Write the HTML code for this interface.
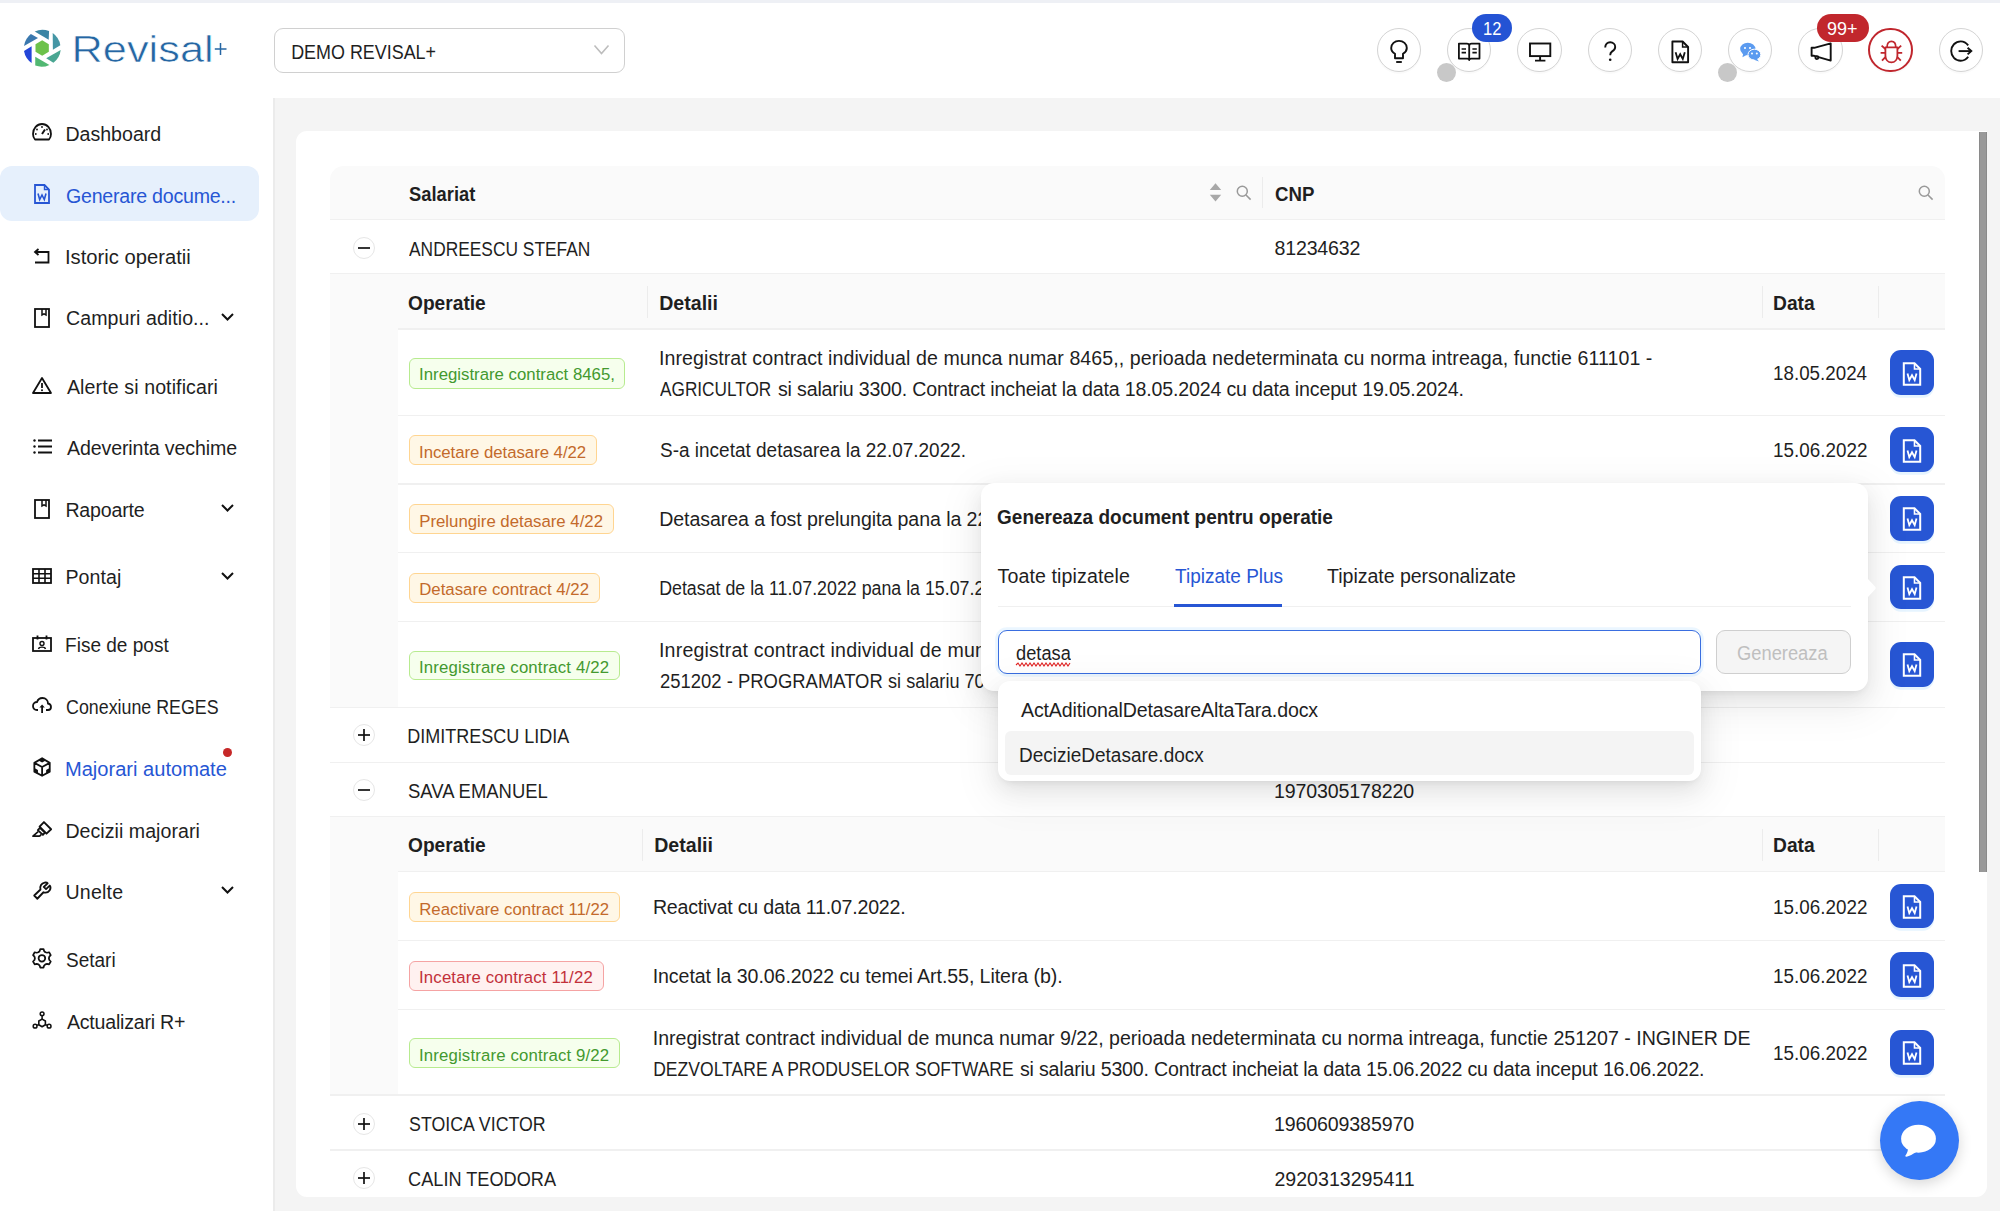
<!DOCTYPE html>
<html><head><meta charset="utf-8"><title>Revisal+</title>
<style>
html,body{margin:0;padding:0;}
body{width:2000px;height:1211px;overflow:hidden;position:relative;background:#fff;font-family:"Liberation Sans",sans-serif;}
.t{position:absolute;white-space:nowrap;line-height:1;}
.b{position:absolute;}
svg.b{overflow:visible;}
</style></head><body>
<div class="b" style="left:0px;top:0px;width:2000px;height:3px;background:#eef0f5"></div>
<div class="b" style="left:272.5px;top:98px;width:1727.5px;height:1113px;background:#f4f4f4"></div>
<div class="b" style="left:273px;top:98px;width:1.5px;height:1113px;background:#ebebeb"></div>
<svg class="b" style="left:20px;top:26px" width="46" height="44" viewBox="0 0 1266 1211"><path d="M405,150 A510,510 0 0 1 800,140 L790,380 Z" fill="#3b85a5"/><path d="M900,195 A510,510 0 0 1 1110,530 L905,655 Z" fill="#4596a5"/><path d="M1120,660 A510,510 0 0 1 920,1010 L720,890 Z" fill="#4aa692"/><path d="M810,1070 A510,510 0 0 1 420,1090 L420,845 Z" fill="#52b872"/><path d="M320,1020 A510,510 0 0 1 110,690 L320,560 Z" fill="#2446d8"/><path d="M110,550 A510,510 0 0 1 300,220 L495,330 Z" fill="#3a78ae"/><polygon points="610,393 793.6,499 793.6,711 610,817 426.4,711 426.4,499" fill="#6cc24a"/></svg>
<div class="t" style="left:71.76px;top:31.08px;font-size:37px;color:#2566a3;transform:scaleX(1.1718);transform-origin:3.04px 0;-webkit-text-stroke:0.6px #fff;">Revisal</div>
<svg class="b" style="left:214px;top:41.5px;" width="14" height="14" viewBox="0 0 14 14"><path d="M6.5,1 L6.5,13 M0.8,7 L12.5,7" stroke="#2566a3" stroke-width="1.5"/></svg>
<div class="b" style="left:274.3px;top:28.3px;width:350.49999999999994px;height:44.3px;background:#fff;border:1.5px solid #d0d0d0;border-radius:9px;box-sizing:border-box"></div>
<div class="t" style="left:290.99px;top:42.61px;font-size:19.6px;color:#1f1f1f;transform:scaleX(0.9146);transform-origin:1.61px 0;">DEMO REVISAL+</div>
<svg class="b" style="left:593px;top:44px;" width="17" height="12" viewBox="0 0 17 12"><path d="M1.5,1.5 L8.5,9.5 L15.5,1.5" fill="none" stroke="#bdbdbd" stroke-width="1.6"/></svg>
<div class="b" style="left:1376.9px;top:28.2px;width:44.2px;height:44.2px;border-radius:50%;border:1.7px solid #d4d4d4;box-sizing:border-box;background:#fff;box-shadow:0 2px 0 rgba(0,0,0,0.02)"></div>
<div class="b" style="left:1446.9px;top:28.2px;width:44.2px;height:44.2px;border-radius:50%;border:1.7px solid #d4d4d4;box-sizing:border-box;background:#fff;box-shadow:0 2px 0 rgba(0,0,0,0.02)"></div>
<div class="b" style="left:1517.4px;top:28.2px;width:44.2px;height:44.2px;border-radius:50%;border:1.7px solid #d4d4d4;box-sizing:border-box;background:#fff;box-shadow:0 2px 0 rgba(0,0,0,0.02)"></div>
<div class="b" style="left:1587.9px;top:28.2px;width:44.2px;height:44.2px;border-radius:50%;border:1.7px solid #d4d4d4;box-sizing:border-box;background:#fff;box-shadow:0 2px 0 rgba(0,0,0,0.02)"></div>
<div class="b" style="left:1657.9px;top:28.2px;width:44.2px;height:44.2px;border-radius:50%;border:1.7px solid #d4d4d4;box-sizing:border-box;background:#fff;box-shadow:0 2px 0 rgba(0,0,0,0.02)"></div>
<div class="b" style="left:1727.9px;top:28.2px;width:44.2px;height:44.2px;border-radius:50%;border:1.7px solid #d4d4d4;box-sizing:border-box;background:#fff;box-shadow:0 2px 0 rgba(0,0,0,0.02)"></div>
<div class="b" style="left:1798.4px;top:28.2px;width:44.2px;height:44.2px;border-radius:50%;border:1.7px solid #d4d4d4;box-sizing:border-box;background:#fff;box-shadow:0 2px 0 rgba(0,0,0,0.02)"></div>
<div class="b" style="left:1868.4px;top:28.2px;width:44.2px;height:44.2px;border-radius:50%;border:2px solid #c0262d;box-sizing:border-box;background:#fff;box-shadow:0 2px 0 rgba(0,0,0,0.02)"></div>
<div class="b" style="left:1938.9px;top:28.2px;width:44.2px;height:44.2px;border-radius:50%;border:1.7px solid #d4d4d4;box-sizing:border-box;background:#fff;box-shadow:0 2px 0 rgba(0,0,0,0.02)"></div>
<svg class="b" style="left:1388px;top:39.5px;" width="22" height="22" viewBox="0 0 22 22"><path d="M7,13.8 C4.6,12.3 3.2,10.3 3.2,8 C3.2,3.9 6.7,0.9 11,0.9 C15.3,0.9 18.8,3.9 18.8,8 C18.8,10.3 17.4,12.3 15,13.8 L15,18.2 L7,18.2 Z" fill="none" stroke="#111" stroke-width="1.9" stroke-linejoin="round"/><path d="M8.2,22 L13.8,22" stroke="#111" stroke-width="1.9"/></svg>
<svg class="b" style="left:1458px;top:39.5px;" width="22" height="22" viewBox="0 0 22 22"><path d="M0.9,3.6 L8.8,3.6 C10.2,3.6 11.2,4.4 11.2,5.8 L11.2,20 C11.2,19 10.4,18.6 9.2,18.6 L0.9,18.6 Z M21.5,3.6 L13.6,3.6 C12.2,3.6 11.2,4.4 11.2,5.8 L11.2,20 C11.2,19 12,18.6 13.2,18.6 L21.5,18.6 Z" fill="none" stroke="#111" stroke-width="1.8" stroke-linejoin="round"/><path d="M3.6,9 L8,9 M3.6,12.6 L8,12.6 M14.4,9 L18.8,9 M14.4,12.6 L18.8,12.6" stroke="#111" stroke-width="1.7"/></svg>
<svg class="b" style="left:1528.5px;top:39.5px;" width="22" height="22" viewBox="0 0 22 22"><rect x="1" y="3.5" width="20.3" height="12.6" fill="none" stroke="#111" stroke-width="1.9"/><path d="M11.1,16 L11.1,20.6 M6,20.6 L16.4,20.6" stroke="#111" stroke-width="1.9"/></svg>
<svg class="b" style="left:1599px;top:39.5px;" width="22" height="22" viewBox="0 0 22 22"><path d="M6.2,7.6 C6.2,4.2 8.4,2.3 11.2,2.3 C14.1,2.3 16.2,4.3 16.2,6.9 C16.2,9.4 14.4,10.6 12.9,11.6 C11.7,12.4 11.2,13.2 11.2,15.2" fill="none" stroke="#111" stroke-width="1.9"/><circle cx="11.2" cy="19.8" r="1.3" fill="#111"/></svg>
<svg class="b" style="left:1669px;top:39.5px;" width="22" height="22" viewBox="0 0 22 22"><path d="M3.4,1.5 L13.6,1.5 L19.1,7 L19.1,22.3 L3.4,22.3 Z" fill="none" stroke="#111" stroke-width="1.9" stroke-linejoin="round"/><path d="M13.6,1.5 L13.6,7 L19.1,7" fill="none" stroke="#111" stroke-width="1.5"/><path d="M6.6,12.2 L8.6,19 L11.2,14.2 L13.8,19 L15.8,12.2" fill="none" stroke="#111" stroke-width="1.8"/></svg>
<svg class="b" style="left:1739px;top:39.5px;" width="22" height="22" viewBox="0 0 22 22"><ellipse cx="8.8" cy="9" rx="7.6" ry="6.3" fill="#5b9bf0"/><path d="M4.2,13.5 L3.4,17.2 L8,14.8 Z" fill="#5b9bf0"/><ellipse cx="15.4" cy="14.6" rx="6.4" ry="5.4" fill="#5b9bf0" stroke="#fff" stroke-width="1"/><path d="M17.5,18.5 L20,21.5 L15,19.7 Z" fill="#5b9bf0"/><circle cx="6" cy="8" r="1.05" fill="#fff"/><circle cx="11" cy="8" r="1.05" fill="#fff"/><circle cx="13" cy="13.6" r="1" fill="#fff"/><circle cx="17.8" cy="13.6" r="1" fill="#fff"/></svg>
<svg class="b" style="left:1809.5px;top:39.5px;" width="22" height="22" viewBox="0 0 22 22"><path d="M1.6,7.8 L4.2,7.8 L20.7,3.4 L20.7,20.6 L4.2,15.8 L1.6,15.8 Z" fill="none" stroke="#111" stroke-width="1.9" stroke-linejoin="round"/><circle cx="6.9" cy="17.6" r="1.6" fill="none" stroke="#111" stroke-width="1.7"/></svg>
<svg class="b" style="left:1879.5px;top:39.5px;" width="22" height="22" viewBox="0 0 22 22"><path d="M5.4,7.4 L17.4,7.4 L17.4,15.5 C17.4,19.6 14.8,22.4 11.4,22.4 C8,22.4 5.4,19.6 5.4,15.5 Z" fill="none" stroke="#c0262d" stroke-width="1.8" stroke-linejoin="round"/><path d="M7,7.4 C7,3.4 9,1.4 11.4,1.4 C13.8,1.4 15.8,3.4 15.8,7.4" fill="none" stroke="#c0262d" stroke-width="1.8"/><path d="M0.6,12.8 L5.4,12.8 M17.4,12.8 L22.2,12.8 M1.6,5.6 L5.4,9 M21.2,5.6 L17.4,9 M2,20.6 L5.6,16.8 M20.8,20.6 L17.2,16.8" fill="none" stroke="#c0262d" stroke-width="1.8"/></svg>
<svg class="b" style="left:1950px;top:39.5px;" width="22" height="22" viewBox="0 0 22 22"><path d="M18.2,5.4 C16.4,3.1 13.9,1.4 10.8,1.4 C5.3,1.4 1.2,5.8 1.2,11.1 C1.2,16.4 5.3,20.8 10.8,20.8 C13.9,20.8 16.4,19.2 18.2,16.8" fill="none" stroke="#111" stroke-width="1.9"/><path d="M8.6,11.1 L20.8,11.1" stroke="#111" stroke-width="1.9"/><path d="M17.6,7.8 L21.3,11.1 L17.6,14.4" fill="none" stroke="#111" stroke-width="1.9"/></svg>
<div class="b" style="left:1471.5px;top:14px;width:40.5px;height:28px;border-radius:14px;background:#2453d4"></div>
<div class="t" style="left:1482.67px;top:20.79px;font-size:17.5px;color:#fff;transform:scaleX(0.9448);transform-origin:1.33px 0;">12</div>
<div class="b" style="left:1817px;top:14px;width:52px;height:28px;border-radius:14px;background:#c1272d"></div>
<div class="t" style="left:1827.38px;top:20.59px;font-size:17.5px;color:#fff;transform:scaleX(1.0285);transform-origin:0.82px 0;">99+</div>
<div class="b" style="left:1437px;top:63px;width:19px;height:19px;border-radius:50%;background:#c8c8c8"></div>
<div class="b" style="left:1718px;top:63px;width:19px;height:19px;border-radius:50%;background:#c8c8c8"></div>
<div class="b" style="left:0;top:166px;width:259px;height:55px;background:#e6f0fc;border-radius:12px"></div>
<div class="t" style="left:65.39px;top:124.71px;font-size:19.6px;color:#1f1f1f;">Dashboard</div>
<div class="t" style="left:66.01px;top:186.61px;font-size:19.6px;color:#2756d4;letter-spacing:-0.237px;">Generare docume...</div>
<div class="t" style="left:65.19px;top:248.11px;font-size:19.6px;color:#1f1f1f;transform:scaleX(1.0314);transform-origin:1.81px 0;">Istoric operatii</div>
<div class="t" style="left:66.00px;top:309.41px;font-size:19.6px;color:#1f1f1f;letter-spacing:0.055px;">Campuri aditio...</div>
<svg class="b" style="left:221px;top:312.7px;" width="13" height="8" viewBox="0 0 13 8"><path d="M1,1 L6.5,6.5 L12,1" fill="none" stroke="#111" stroke-width="2"/></svg>
<div class="t" style="left:66.96px;top:377.51px;font-size:19.6px;color:#1f1f1f;letter-spacing:0.096px;">Alerte si notificari</div>
<div class="t" style="left:66.96px;top:438.81px;font-size:19.6px;color:#1f1f1f;letter-spacing:-0.113px;">Adeverinta vechime</div>
<div class="t" style="left:65.39px;top:500.71px;font-size:19.6px;color:#1f1f1f;letter-spacing:-0.193px;">Rapoarte</div>
<svg class="b" style="left:221px;top:504px;" width="13" height="8" viewBox="0 0 13 8"><path d="M1,1 L6.5,6.5 L12,1" fill="none" stroke="#111" stroke-width="2"/></svg>
<div class="t" style="left:65.39px;top:568.41px;font-size:19.6px;color:#1f1f1f;letter-spacing:0.071px;">Pontaj</div>
<svg class="b" style="left:221px;top:571.7px;" width="13" height="8" viewBox="0 0 13 8"><path d="M1,1 L6.5,6.5 L12,1" fill="none" stroke="#111" stroke-width="2"/></svg>
<div class="t" style="left:65.39px;top:635.51px;font-size:19.6px;color:#1f1f1f;transform:scaleX(0.9713);transform-origin:1.61px 0;">Fise de post</div>
<div class="t" style="left:66.00px;top:697.71px;font-size:19.6px;color:#1f1f1f;transform:scaleX(0.9091);transform-origin:1.00px 0;">Conexiune REGES</div>
<div class="t" style="left:65.39px;top:759.71px;font-size:19.6px;color:#2756d4;transform:scaleX(1.0253);transform-origin:1.61px 0;">Majorari automate</div>
<div class="t" style="left:65.39px;top:821.61px;font-size:19.6px;color:#1f1f1f;letter-spacing:0.038px;">Decizii majorari</div>
<div class="t" style="left:65.49px;top:883.11px;font-size:19.6px;color:#1f1f1f;letter-spacing:0.186px;">Unelte</div>
<svg class="b" style="left:221px;top:886.4px;" width="13" height="8" viewBox="0 0 13 8"><path d="M1,1 L6.5,6.5 L12,1" fill="none" stroke="#111" stroke-width="2"/></svg>
<div class="t" style="left:66.11px;top:951.01px;font-size:19.6px;color:#1f1f1f;transform:scaleX(0.9696);transform-origin:0.89px 0;">Setari</div>
<div class="t" style="left:66.96px;top:1012.81px;font-size:19.6px;color:#1f1f1f;letter-spacing:-0.227px;">Actualizari R+</div>
<div class="b" style="left:222.5px;top:747.5px;width:9px;height:9px;border-radius:50%;background:#c62828"></div>
<svg class="b" style="left:28px;top:752px;" width="28" height="28" viewBox="0 0 1211 1211"><path d="M610,270 L940,470 L940,850 L610,1030 L275,850 L275,470 Z M275,470 L610,650 L940,470 M610,650 L610,1030" fill="none" stroke="#111" stroke-width="78" stroke-linejoin="round"/><path d="M610,270 L770,365 L610,455 L450,365 Z M275,690 L430,775 L430,950 L275,850 Z M940,690 L785,775 L785,950 L940,850 Z" fill="#111"/></svg>
<svg class="b" style="left:28px;top:814px;" width="28" height="28" viewBox="0 0 1211 1211"><path d="M690,350 L1000,660 L800,850 L500,545 Z" fill="none" stroke="#111" stroke-width="80" stroke-linejoin="round"/><path d="M515,600 L730,810 L645,905 L425,695 Z" fill="none" stroke="#111" stroke-width="78" stroke-linejoin="round"/><path d="M440,765 L215,955 L490,955 C530,950 555,920 570,885" fill="none" stroke="#111" stroke-width="75" stroke-linejoin="round"/></svg>
<svg class="b" style="left:28px;top:877px;" width="28" height="28" viewBox="0 0 1211 1211"><path d="M270,800 L540,540 C500,400 580,260 720,240 C780,232 830,245 850,275 L680,430 L780,525 L940,370 C975,420 985,500 940,570 C880,660 760,690 670,660 L400,940 Z" fill="none" stroke="#111" stroke-width="80" stroke-linejoin="round"/></svg>
<svg class="b" style="left:28px;top:944px;" width="28" height="28" viewBox="28 944 28 28"><polygon points="38.40,952.24 39.68,951.03 40.27,949.04 43.53,949.04 44.12,951.03 45.40,952.24 47.08,952.74 49.10,952.26 50.73,955.09 49.31,956.59 48.90,958.30 49.31,960.01 50.73,961.51 49.10,964.34 47.08,963.86 45.40,964.36 44.12,965.57 43.53,967.56 40.27,967.56 39.68,965.57 38.40,964.36 36.72,963.86 34.70,964.34 33.07,961.51 34.49,960.01 34.90,958.30 34.49,956.59 33.07,955.09 34.70,952.26 36.72,952.74" fill="none" stroke="#111" stroke-width="1.75" stroke-linejoin="round"/><circle cx="41.9" cy="958.3" r="3.3" fill="none" stroke="#111" stroke-width="1.75"/></svg>
<svg class="b" style="left:28px;top:1004px;" width="28" height="28" viewBox="28 1004 28 28"><polygon points="42.10,1019.10 45.39,1021.00 45.39,1024.80 42.10,1026.70 38.81,1024.80 38.81,1021.00" fill="none" stroke="#111" stroke-width="1.6" stroke-linejoin="round"/><circle cx="42.1" cy="1013.8" r="1.9" fill="none" stroke="#111" stroke-width="1.5"/><circle cx="35.1" cy="1026.2" r="1.9" fill="none" stroke="#111" stroke-width="1.5"/><circle cx="49.1" cy="1026.2" r="1.9" fill="none" stroke="#111" stroke-width="1.5"/><path d="M42.1,1015.7 L42.1,1019.1 M36.8,1025.2 L38.8,1024.8 M47.4,1025.2 L45.4,1024.8" stroke="#111" stroke-width="1.5"/></svg>
<svg class="b" style="left:32px;top:123px;" width="20" height="18" viewBox="0 0 20 18"><path d="M3,16.5 C1.5,14.8 1,13 1,11 C1,5.5 5,1 10,1 C15,1 19,5.5 19,11 C19,13 18.5,14.8 17,16.5 Z" fill="none" stroke="#111" stroke-width="1.8" stroke-linejoin="round"/><path d="M10,11 L13,6.5" stroke="#111" stroke-width="2"/><circle cx="10" cy="4" r="0.9" fill="#111"/><circle cx="5" cy="6.5" r="0.9" fill="#111"/><circle cx="15" cy="6.5" r="0.9" fill="#111"/><circle cx="3.8" cy="11" r="0.9" fill="#111"/><circle cx="16.2" cy="11" r="0.9" fill="#111"/></svg>
<svg class="b" style="left:34px;top:184px;" width="16" height="20" viewBox="0 0 16 20"><path d="M1,1 L10.5,1 L15,5.5 L15,19 L1,19 Z" fill="none" stroke="#2756d4" stroke-width="1.8"/><path d="M10.5,1 L10.5,5.5 L15,5.5" fill="none" stroke="#2756d4" stroke-width="1.4"/><path d="M4,9.5 L5.7,15.5 L8,11 L10.3,15.5 L12,9.5" fill="none" stroke="#2756d4" stroke-width="1.6"/></svg>
<svg class="b" style="left:34px;top:248px;" width="16" height="16" viewBox="0 0 16 16"><path d="M4.5,1 L1,4 L4.5,7 M1,4 L14.5,4 L14.5,14.5 L1,14.5" fill="none" stroke="#111" stroke-width="1.8"/></svg>
<svg class="b" style="left:34px;top:308px;" width="16" height="20" viewBox="0 0 16 20"><rect x="1" y="1" width="14" height="18" fill="none" stroke="#111" stroke-width="1.8"/><path d="M8,1 L8,7 L10,5.8 L12,7 L12,1" fill="none" stroke="#111" stroke-width="1.5"/></svg>
<svg class="b" style="left:32px;top:377px;" width="20" height="17" viewBox="0 0 20 17"><path d="M10,1 L19,16 L1,16 Z" fill="none" stroke="#111" stroke-width="1.8" stroke-linejoin="round"/><path d="M10,6 L10,11" stroke="#111" stroke-width="1.8"/><circle cx="10" cy="13.3" r="1" fill="#111"/></svg>
<svg class="b" style="left:32.5px;top:439px;" width="19" height="15" viewBox="0 0 19 15"><circle cx="1.5" cy="1.5" r="1.2" fill="#111"/><circle cx="1.5" cy="7.5" r="1.2" fill="#111"/><circle cx="1.5" cy="13.5" r="1.2" fill="#111"/><path d="M5,1.5 L19,1.5 M5,7.5 L19,7.5 M5,13.5 L19,13.5" stroke="#111" stroke-width="1.8"/></svg>
<svg class="b" style="left:34px;top:499px;" width="16" height="20" viewBox="0 0 16 20"><rect x="1" y="1" width="14" height="18" fill="none" stroke="#111" stroke-width="1.8"/><path d="M8,1 L8,7 L10,5.8 L12,7 L12,1" fill="none" stroke="#111" stroke-width="1.5"/></svg>
<svg class="b" style="left:32px;top:568px;" width="20" height="16" viewBox="0 0 20 16"><rect x="1" y="1" width="18" height="14" fill="none" stroke="#111" stroke-width="1.8"/><path d="M1,5.7 L19,5.7 M1,10.3 L19,10.3 M7,1 L7,15 M13,1 L13,15" stroke="#111" stroke-width="1.6"/></svg>
<svg class="b" style="left:32px;top:635px;" width="20" height="17" viewBox="0 0 20 17"><rect x="1" y="3" width="18" height="13" fill="none" stroke="#111" stroke-width="1.8"/><path d="M5.5,0.5 L5.5,4.5 M14.5,0.5 L14.5,4.5" stroke="#111" stroke-width="1.8"/><circle cx="10" cy="8.5" r="2" fill="none" stroke="#111" stroke-width="1.4"/><path d="M6.5,14 C7,11.5 13,11.5 13.5,14" fill="none" stroke="#111" stroke-width="1.4"/></svg>
<svg class="b" style="left:32px;top:697px;" width="20" height="17" viewBox="0 0 20 17"><path d="M6,13 L5,13 C2.5,13 1,11.3 1,9 C1,6.8 2.8,5 5,5 C5.8,2.6 7.8,1 10.5,1 C13.7,1 16,3.4 16,6.5 C18,6.8 19,8.3 19,10 C19,11.8 17.7,13 16,13 L14,13" fill="none" stroke="#111" stroke-width="1.8"/><path d="M10.1,16 L10.1,10" fill="none" stroke="#111" stroke-width="1.8"/><path d="M10.1,7.6 L7.4,10.6 L12.8,10.6 Z" fill="#111"/></svg>
<div class="b" style="left:296px;top:131px;width:1691px;height:1066px;background:#fff;border-radius:11px 0 11px 11px"></div>
<div class="b" style="left:1979px;top:132px;width:7.5px;height:740px;background:#999;border-left:1px solid #8a8a8a;border-right:1px solid #8a8a8a;box-sizing:border-box"></div>
<div class="b" style="left:330px;top:166px;width:1615px;height:54px;background:#fafafa;border-radius:14px 14px 0 0;border-bottom:1.4px solid #f0f0f0;box-sizing:border-box"></div>
<div class="t" style="left:408.64px;top:184.61px;font-size:19.6px;color:#1f1f1f;font-weight:700;transform:scaleX(0.9355);transform-origin:0.56px 0;">Salariat</div>
<div class="t" style="left:1274.70px;top:184.81px;font-size:19.6px;color:#1f1f1f;font-weight:700;transform:scaleX(0.9522);transform-origin:0.80px 0;">CNP</div>
<div class="b" style="left:1262px;top:177px;width:1.400000000000091px;height:31px;background:#ececec"></div>
<svg class="b" style="left:1209px;top:182px;" width="13" height="20" viewBox="0 0 13 20"><path d="M0.8,8 L6.5,1.2 L12.2,8 Z M0.8,12.8 L6.5,19.6 L12.2,12.8 Z" fill="#a8a8a8"/></svg>
<svg class="b" style="left:1235.5px;top:184.5px;" width="16" height="16" viewBox="0 0 16 16"><circle cx="6.3" cy="6.3" r="5" fill="none" stroke="#999" stroke-width="1.5"/><path d="M10,10 L14.6,14.6" stroke="#999" stroke-width="1.6"/></svg>
<svg class="b" style="left:1917.5px;top:184.5px;" width="16" height="16" viewBox="0 0 16 16"><circle cx="6.3" cy="6.3" r="5" fill="none" stroke="#999" stroke-width="1.5"/><path d="M10,10 L14.6,14.6" stroke="#999" stroke-width="1.6"/></svg>
<div class="b" style="left:352.9px;top:236.8px;width:22px;height:22px;border-radius:50%;border:1.3px solid #e6e6e6;box-sizing:border-box;background:#fff"></div>
<svg class="b" style="left:356.9px;top:240.8px;" width="14" height="14" viewBox="0 0 14 14"><path d="M1,7 L13,7" stroke="#111" stroke-width="1.7"/></svg>
<div class="t" style="left:408.96px;top:239.61px;font-size:19.6px;color:#1f1f1f;transform:scaleX(0.8862);transform-origin:0.04px 0;">ANDREESCU STEFAN</div>
<div class="t" style="left:1274.55px;top:239.41px;font-size:19.6px;color:#1f1f1f;letter-spacing:-0.195px;">81234632</div>
<div class="b" style="left:330px;top:273.2px;width:1615px;height:1.3999999999999773px;background:#f0f0f0"></div>
<div class="b" style="left:330px;top:274px;width:1615px;height:433.29999999999995px;background:#fafafa"></div>
<div class="b" style="left:397.5px;top:274px;width:1547.5px;height:55px;background:#fafafa"></div>
<div class="b" style="left:397.5px;top:328.2px;width:1547.5px;height:1.3999999999999773px;background:#f0f0f0"></div>
<div class="t" style="left:408.40px;top:293.51px;font-size:19.6px;color:#1f1f1f;font-weight:700;transform:scaleX(0.9777);transform-origin:0.80px 0;">Operatie</div>
<div class="t" style="left:659.19px;top:293.51px;font-size:19.6px;color:#1f1f1f;font-weight:700;">Detalii</div>
<div class="t" style="left:1773.09px;top:293.51px;font-size:19.6px;color:#1f1f1f;font-weight:700;transform:scaleX(0.9808);transform-origin:1.31px 0;">Data</div>
<div class="b" style="left:647px;top:286px;width:1.3999999999999773px;height:32px;background:#ececec"></div>
<div class="b" style="left:1761.6px;top:286px;width:1.400000000000091px;height:32px;background:#ececec"></div>
<div class="b" style="left:1877.5px;top:286px;width:1.400000000000091px;height:32px;background:#ececec"></div>
<div class="b" style="left:397.5px;top:330px;width:1547.5px;height:85.30000000000001px;background:#fff"></div>
<div class="b" style="left:397.5px;top:415.3px;width:1547.5px;height:68.69999999999999px;background:#fff"></div>
<div class="b" style="left:397.5px;top:484px;width:1547.5px;height:68.70000000000005px;background:#fff"></div>
<div class="b" style="left:397.5px;top:552.7px;width:1547.5px;height:68.79999999999995px;background:#fff"></div>
<div class="b" style="left:397.5px;top:621.5px;width:1547.5px;height:85.79999999999995px;background:#fff"></div>
<div class="b" style="left:397.5px;top:414.6px;width:1547.5px;height:1.3999999999999773px;background:#f0f0f0"></div>
<div class="b" style="left:397.5px;top:483.3px;width:1547.5px;height:1.3999999999999773px;background:#f0f0f0"></div>
<div class="b" style="left:397.5px;top:552.0px;width:1547.5px;height:1.3999999999999773px;background:#f0f0f0"></div>
<div class="b" style="left:397.5px;top:620.8px;width:1547.5px;height:1.3999999999999773px;background:#f0f0f0"></div>
<div class="b" style="left:409.3px;top:357.5px;width:216.2px;height:31.0px;background:#f6ffed;border:1.4px solid #b7eb8f;border-radius:6px;box-sizing:border-box"></div>
<div class="t" style="left:419.05px;top:367.48px;font-size:16.8px;color:#43992f;">Inregistrare contract 8465,</div>
<div class="t" style="left:658.99px;top:348.96px;font-size:19.6px;color:#1f1f1f;letter-spacing:0.066px;">Inregistrat contract individual de munca numar 8465,, perioada nedeterminata cu norma intreaga, functie 611101 -</div>
<div class="t" style="left:660.46px;top:379.96px;font-size:19.6px;color:#1f1f1f;transform:scaleX(0.8788);transform-origin:0.04px 0;">AGRICULTOR</div>
<div class="t" style="left:777.95px;top:379.96px;font-size:19.6px;color:#1f1f1f;letter-spacing:-0.166px;">si salariu 3300. Contract incheiat la data 18.05.2024 cu data inceput 19.05.2024.</div>
<div class="t" style="left:1772.91px;top:364.46px;font-size:19.6px;color:#1f1f1f;transform:scaleX(0.9581);transform-origin:1.49px 0;">18.05.2024</div>
<div class="b" style="left:1889.5px;top:350.2px;width:44.8px;height:44.8px;border-radius:11px;background:#2756d4;box-shadow:0 2.8px 0 rgba(5,145,255,0.1)"></div>
<svg class="b" style="left:1902px;top:361.5px;" width="20" height="24" viewBox="0 0 20 24"><path d="M1.8,1.3 L12.5,1.3 L18.2,7 L18.2,22.8 L1.8,22.8 Z" fill="none" stroke="#fff" stroke-width="2"/><path d="M12.5,1.3 L12.5,7 L18.2,7" fill="none" stroke="#fff" stroke-width="1.6"/><path d="M5.5,11.5 L7.3,18.2 L10,13.2 L12.7,18.2 L14.5,11.5" fill="none" stroke="#fff" stroke-width="1.8"/></svg>
<div class="b" style="left:409.3px;top:435px;width:187.7px;height:30.30000000000001px;background:#fff7e6;border:1.4px solid #ffd591;border-radius:6px;box-sizing:border-box"></div>
<div class="t" style="left:419.05px;top:444.63px;font-size:16.8px;color:#c36a2b;letter-spacing:-0.039px;">Incetare detasare 4/22</div>
<div class="t" style="left:659.91px;top:441.46px;font-size:19.6px;color:#1f1f1f;transform:scaleX(0.9687);transform-origin:0.89px 0;">S-a incetat detasarea la 22.07.2022.</div>
<div class="t" style="left:1772.91px;top:441.46px;font-size:19.6px;color:#1f1f1f;transform:scaleX(0.9622);transform-origin:1.49px 0;">15.06.2022</div>
<div class="b" style="left:1889.5px;top:427.2px;width:44.8px;height:44.8px;border-radius:11px;background:#2756d4;box-shadow:0 2.8px 0 rgba(5,145,255,0.1)"></div>
<svg class="b" style="left:1902px;top:438.5px;" width="20" height="24" viewBox="0 0 20 24"><path d="M1.8,1.3 L12.5,1.3 L18.2,7 L18.2,22.8 L1.8,22.8 Z" fill="none" stroke="#fff" stroke-width="2"/><path d="M12.5,1.3 L12.5,7 L18.2,7" fill="none" stroke="#fff" stroke-width="1.6"/><path d="M5.5,11.5 L7.3,18.2 L10,13.2 L12.7,18.2 L14.5,11.5" fill="none" stroke="#fff" stroke-width="1.8"/></svg>
<div class="b" style="left:409.3px;top:504.4px;width:204.3px;height:29.800000000000068px;background:#fff7e6;border:1.4px solid #ffd591;border-radius:6px;box-sizing:border-box"></div>
<div class="t" style="left:419.22px;top:513.78px;font-size:16.8px;color:#c36a2b;">Prelungire detasare 4/22</div>
<div class="t" style="left:659.19px;top:510.16px;font-size:19.6px;color:#1f1f1f;letter-spacing:-0.084px;">Detasarea a fost prelungita pana la 22.07.2022.</div>
<div class="t" style="left:1772.91px;top:510.16px;font-size:19.6px;color:#1f1f1f;transform:scaleX(0.9622);transform-origin:1.49px 0;">15.06.2022</div>
<div class="b" style="left:1889.5px;top:496.0px;width:44.8px;height:44.8px;border-radius:11px;background:#2756d4;box-shadow:0 2.8px 0 rgba(5,145,255,0.1)"></div>
<svg class="b" style="left:1902px;top:507.2px;" width="20" height="24" viewBox="0 0 20 24"><path d="M1.8,1.3 L12.5,1.3 L18.2,7 L18.2,22.8 L1.8,22.8 Z" fill="none" stroke="#fff" stroke-width="2"/><path d="M12.5,1.3 L12.5,7 L18.2,7" fill="none" stroke="#fff" stroke-width="1.6"/><path d="M5.5,11.5 L7.3,18.2 L10,13.2 L12.7,18.2 L14.5,11.5" fill="none" stroke="#fff" stroke-width="1.8"/></svg>
<div class="b" style="left:409.3px;top:573px;width:190.99999999999994px;height:30px;background:#fff7e6;border:1.4px solid #ffd591;border-radius:6px;box-sizing:border-box"></div>
<div class="t" style="left:419.22px;top:582.48px;font-size:16.8px;color:#c36a2b;">Detasare contract 4/22</div>
<div class="t" style="left:659.19px;top:578.91px;font-size:19.6px;color:#1f1f1f;transform:scaleX(0.9082);transform-origin:1.61px 0;">Detasat de la 11.07.2022 pana la 15.07.2022 in Germania.</div>
<div class="t" style="left:1772.91px;top:578.91px;font-size:19.6px;color:#1f1f1f;transform:scaleX(0.9622);transform-origin:1.49px 0;">15.06.2022</div>
<div class="b" style="left:1889.5px;top:564.7px;width:44.8px;height:44.8px;border-radius:11px;background:#2756d4;box-shadow:0 2.8px 0 rgba(5,145,255,0.1)"></div>
<svg class="b" style="left:1902px;top:576.0px;" width="20" height="24" viewBox="0 0 20 24"><path d="M1.8,1.3 L12.5,1.3 L18.2,7 L18.2,22.8 L1.8,22.8 Z" fill="none" stroke="#fff" stroke-width="2"/><path d="M12.5,1.3 L12.5,7 L18.2,7" fill="none" stroke="#fff" stroke-width="1.6"/><path d="M5.5,11.5 L7.3,18.2 L10,13.2 L12.7,18.2 L14.5,11.5" fill="none" stroke="#fff" stroke-width="1.8"/></svg>
<div class="b" style="left:409.3px;top:650.5px;width:210.59999999999997px;height:29.600000000000023px;background:#f6ffed;border:1.4px solid #b7eb8f;border-radius:6px;box-sizing:border-box"></div>
<div class="t" style="left:419.05px;top:659.78px;font-size:16.8px;color:#43992f;letter-spacing:0.137px;">Inregistrare contract 4/22</div>
<div class="t" style="left:658.99px;top:640.71px;font-size:19.6px;color:#1f1f1f;letter-spacing:0.183px;">Inregistrat contract individual de munca numar 4/22, perioada nedeterminata cu norma intreaga, functie</div>
<div class="t" style="left:659.91px;top:671.71px;font-size:19.6px;color:#1f1f1f;transform:scaleX(0.9411);transform-origin:0.99px 0;">251202 - PROGRAMATOR</div>
<div class="t" style="left:888.35px;top:671.71px;font-size:19.6px;color:#1f1f1f;transform:scaleX(0.9241);transform-origin:0.55px 0;">si salariu 7000. Contract incheiat la data 15.06.2022 cu data inceput 16.06.2022.</div>
<div class="t" style="left:1772.91px;top:656.21px;font-size:19.6px;color:#1f1f1f;transform:scaleX(0.9622);transform-origin:1.49px 0;">15.06.2022</div>
<div class="b" style="left:1889.5px;top:642.0px;width:44.8px;height:44.8px;border-radius:11px;background:#2756d4;box-shadow:0 2.8px 0 rgba(5,145,255,0.1)"></div>
<svg class="b" style="left:1902px;top:653.3px;" width="20" height="24" viewBox="0 0 20 24"><path d="M1.8,1.3 L12.5,1.3 L18.2,7 L18.2,22.8 L1.8,22.8 Z" fill="none" stroke="#fff" stroke-width="2"/><path d="M12.5,1.3 L12.5,7 L18.2,7" fill="none" stroke="#fff" stroke-width="1.6"/><path d="M5.5,11.5 L7.3,18.2 L10,13.2 L12.7,18.2 L14.5,11.5" fill="none" stroke="#fff" stroke-width="1.8"/></svg>
<div class="b" style="left:330px;top:706.6999999999999px;width:1615px;height:1.3999999999999773px;background:#f0f0f0"></div>
<div class="b" style="left:352.9px;top:724.0px;width:22px;height:22px;border-radius:50%;border:1.3px solid #e6e6e6;box-sizing:border-box;background:#fff"></div>
<svg class="b" style="left:356.9px;top:728px;" width="14" height="14" viewBox="0 0 14 14"><path d="M1,7 L13,7" stroke="#111" stroke-width="1.7"/><path d="M7,1 L7,13" stroke="#111" stroke-width="1.7"/></svg>
<div class="t" style="left:407.39px;top:726.91px;font-size:19.6px;color:#1f1f1f;transform:scaleX(0.9189);transform-origin:1.61px 0;">DIMITRESCU LIDIA</div>
<div class="t" style="left:1273.91px;top:726.81px;font-size:19.6px;color:#1f1f1f;letter-spacing:-0.104px;">1970305178221</div>
<div class="b" style="left:330px;top:761.7px;width:1615px;height:1.3999999999999773px;background:#f0f0f0"></div>
<div class="b" style="left:352.9px;top:779.0px;width:22px;height:22px;border-radius:50%;border:1.3px solid #e6e6e6;box-sizing:border-box;background:#fff"></div>
<svg class="b" style="left:356.9px;top:783px;" width="14" height="14" viewBox="0 0 14 14"><path d="M1,7 L13,7" stroke="#111" stroke-width="1.7"/></svg>
<div class="t" style="left:408.11px;top:781.71px;font-size:19.6px;color:#1f1f1f;transform:scaleX(0.9410);transform-origin:0.89px 0;">SAVA EMANUEL</div>
<div class="t" style="left:1273.91px;top:781.71px;font-size:19.6px;color:#1f1f1f;letter-spacing:-0.120px;">1970305178220</div>
<div class="b" style="left:330px;top:816px;width:1615px;height:1.3999999999999773px;background:#f0f0f0"></div>
<div class="b" style="left:330px;top:816.7px;width:1615px;height:278.29999999999995px;background:#fafafa"></div>
<div class="b" style="left:397.5px;top:816.7px;width:1547.5px;height:55.0px;background:#fafafa"></div>
<div class="b" style="left:397.5px;top:870.9000000000001px;width:1547.5px;height:1.3999999999999773px;background:#f0f0f0"></div>
<div class="t" style="left:408.40px;top:836.21px;font-size:19.6px;color:#1f1f1f;font-weight:700;transform:scaleX(0.9777);transform-origin:0.80px 0;">Operatie</div>
<div class="t" style="left:654.19px;top:836.21px;font-size:19.6px;color:#1f1f1f;font-weight:700;">Detalii</div>
<div class="t" style="left:1773.09px;top:836.21px;font-size:19.6px;color:#1f1f1f;font-weight:700;transform:scaleX(0.9808);transform-origin:1.31px 0;">Data</div>
<div class="b" style="left:642px;top:828.7px;width:1.3999999999999773px;height:32.0px;background:#ececec"></div>
<div class="b" style="left:1761.6px;top:828.7px;width:1.400000000000091px;height:32.0px;background:#ececec"></div>
<div class="b" style="left:1877.5px;top:828.7px;width:1.400000000000091px;height:32.0px;background:#ececec"></div>
<div class="b" style="left:397.5px;top:871.7px;width:1547.5px;height:68.59999999999991px;background:#fff"></div>
<div class="b" style="left:397.5px;top:940.3px;width:1547.5px;height:69.10000000000002px;background:#fff"></div>
<div class="b" style="left:397.5px;top:1009.4px;width:1547.5px;height:85.60000000000002px;background:#fff"></div>
<div class="b" style="left:397.5px;top:939.5999999999999px;width:1547.5px;height:1.3999999999999773px;background:#f0f0f0"></div>
<div class="b" style="left:397.5px;top:1008.6999999999999px;width:1547.5px;height:1.3999999999999773px;background:#f0f0f0"></div>
<div class="b" style="left:409.3px;top:892.2px;width:210.7px;height:29.899999999999977px;background:#fff7e6;border:1.4px solid #ffd591;border-radius:6px;box-sizing:border-box"></div>
<div class="t" style="left:419.22px;top:901.63px;font-size:16.8px;color:#c36a2b;">Reactivare contract 11/22</div>
<div class="t" style="left:652.89px;top:897.81px;font-size:19.6px;color:#1f1f1f;letter-spacing:-0.220px;">Reactivat cu data 11.07.2022.</div>
<div class="t" style="left:1772.91px;top:897.81px;font-size:19.6px;color:#1f1f1f;transform:scaleX(0.9622);transform-origin:1.49px 0;">15.06.2022</div>
<div class="b" style="left:1889.5px;top:883.6px;width:44.8px;height:44.8px;border-radius:11px;background:#2756d4;box-shadow:0 2.8px 0 rgba(5,145,255,0.1)"></div>
<svg class="b" style="left:1902px;top:894.9px;" width="20" height="24" viewBox="0 0 20 24"><path d="M1.8,1.3 L12.5,1.3 L18.2,7 L18.2,22.8 L1.8,22.8 Z" fill="none" stroke="#fff" stroke-width="2"/><path d="M12.5,1.3 L12.5,7 L18.2,7" fill="none" stroke="#fff" stroke-width="1.6"/><path d="M5.5,11.5 L7.3,18.2 L10,13.2 L12.7,18.2 L14.5,11.5" fill="none" stroke="#fff" stroke-width="1.8"/></svg>
<div class="b" style="left:409.3px;top:960.8px;width:194.3px;height:29.90000000000009px;background:#fff1f0;border:1.4px solid #f5a3a3;border-radius:6px;box-sizing:border-box"></div>
<div class="t" style="left:419.05px;top:970.23px;font-size:16.8px;color:#c2303a;letter-spacing:0.150px;">Incetare contract 11/22</div>
<div class="t" style="left:652.69px;top:966.66px;font-size:19.6px;color:#1f1f1f;letter-spacing:-0.080px;">Incetat la 30.06.2022 cu temei Art.55, Litera (b).</div>
<div class="t" style="left:1772.91px;top:966.66px;font-size:19.6px;color:#1f1f1f;transform:scaleX(0.9622);transform-origin:1.49px 0;">15.06.2022</div>
<div class="b" style="left:1889.5px;top:952.4px;width:44.8px;height:44.8px;border-radius:11px;background:#2756d4;box-shadow:0 2.8px 0 rgba(5,145,255,0.1)"></div>
<svg class="b" style="left:1902px;top:963.7px;" width="20" height="24" viewBox="0 0 20 24"><path d="M1.8,1.3 L12.5,1.3 L18.2,7 L18.2,22.8 L1.8,22.8 Z" fill="none" stroke="#fff" stroke-width="2"/><path d="M12.5,1.3 L12.5,7 L18.2,7" fill="none" stroke="#fff" stroke-width="1.6"/><path d="M5.5,11.5 L7.3,18.2 L10,13.2 L12.7,18.2 L14.5,11.5" fill="none" stroke="#fff" stroke-width="1.8"/></svg>
<div class="b" style="left:409.3px;top:1038px;width:210.7px;height:30.40000000000009px;background:#f6ffed;border:1.4px solid #b7eb8f;border-radius:6px;box-sizing:border-box"></div>
<div class="t" style="left:419.05px;top:1047.68px;font-size:16.8px;color:#43992f;letter-spacing:0.141px;">Inregistrare contract 9/22</div>
<div class="t" style="left:652.69px;top:1028.51px;font-size:19.6px;color:#1f1f1f;">Inregistrat contract individual de munca numar 9/22, perioada nedeterminata cu norma intreaga, functie 251207 - INGINER DE</div>
<div class="t" style="left:653.39px;top:1059.51px;font-size:19.6px;color:#1f1f1f;transform:scaleX(0.8959);transform-origin:1.61px 0;">DEZVOLTARE A PRODUSELOR SOFTWARE</div>
<div class="t" style="left:1019.95px;top:1059.51px;font-size:19.6px;color:#1f1f1f;letter-spacing:-0.184px;">si salariu 5300. Contract incheiat la data 15.06.2022 cu data inceput 16.06.2022.</div>
<div class="t" style="left:1772.91px;top:1044.01px;font-size:19.6px;color:#1f1f1f;transform:scaleX(0.9622);transform-origin:1.49px 0;">15.06.2022</div>
<div class="b" style="left:1889.5px;top:1029.8px;width:44.8px;height:44.8px;border-radius:11px;background:#2756d4;box-shadow:0 2.8px 0 rgba(5,145,255,0.1)"></div>
<svg class="b" style="left:1902px;top:1041.1px;" width="20" height="24" viewBox="0 0 20 24"><path d="M1.8,1.3 L12.5,1.3 L18.2,7 L18.2,22.8 L1.8,22.8 Z" fill="none" stroke="#fff" stroke-width="2"/><path d="M12.5,1.3 L12.5,7 L18.2,7" fill="none" stroke="#fff" stroke-width="1.6"/><path d="M5.5,11.5 L7.3,18.2 L10,13.2 L12.7,18.2 L14.5,11.5" fill="none" stroke="#fff" stroke-width="1.8"/></svg>
<div class="b" style="left:330px;top:1094.4px;width:1615px;height:1.400000000000091px;background:#f0f0f0"></div>
<div class="b" style="left:352.9px;top:1112.5px;width:22px;height:22px;border-radius:50%;border:1.3px solid #e6e6e6;box-sizing:border-box;background:#fff"></div>
<svg class="b" style="left:356.9px;top:1116.5px;" width="14" height="14" viewBox="0 0 14 14"><path d="M1,7 L13,7" stroke="#111" stroke-width="1.7"/><path d="M7,1 L7,13" stroke="#111" stroke-width="1.7"/></svg>
<div class="t" style="left:408.51px;top:1115.41px;font-size:19.6px;color:#1f1f1f;transform:scaleX(0.9069);transform-origin:0.89px 0;">STOICA VICTOR</div>
<div class="t" style="left:1273.91px;top:1115.41px;font-size:19.6px;color:#1f1f1f;letter-spacing:-0.120px;">1960609385970</div>
<div class="b" style="left:330px;top:1149.4px;width:1615px;height:1.400000000000091px;background:#f0f0f0"></div>
<div class="b" style="left:352.9px;top:1167.0px;width:22px;height:22px;border-radius:50%;border:1.3px solid #e6e6e6;box-sizing:border-box;background:#fff"></div>
<svg class="b" style="left:356.9px;top:1171px;" width="14" height="14" viewBox="0 0 14 14"><path d="M1,7 L13,7" stroke="#111" stroke-width="1.7"/><path d="M7,1 L7,13" stroke="#111" stroke-width="1.7"/></svg>
<div class="t" style="left:408.00px;top:1169.71px;font-size:19.6px;color:#1f1f1f;transform:scaleX(0.9263);transform-origin:1.00px 0;">CALIN TEODORA</div>
<div class="t" style="left:1274.41px;top:1169.71px;font-size:19.6px;color:#1f1f1f;">2920313295411</div>
<div class="b" style="left:296px;top:1197px;width:1704px;height:14px;background:#f4f4f4"></div>
<div class="b" style="left:981px;top:483.4px;width:887.4px;height:208px;background:#fff;border-radius:13px;box-shadow:0 8px 22px 0 rgba(0,0,0,0.08),0 4px 8px -5px rgba(0,0,0,0.12),0 12px 39px 11px rgba(0,0,0,0.05)"></div>
<svg class="b" style="left:1866px;top:577px;" width="12" height="22" viewBox="0 0 12 22"><path d="M0,0 L2,2 L9,9.5 C10,10.5 10,11.5 9,12.5 L2,20 L0,22 Z" fill="#fff"/></svg>
<div class="t" style="left:997.20px;top:507.71px;font-size:19.6px;color:#1f1f1f;font-weight:700;transform:scaleX(0.9702);transform-origin:0.80px 0;">Genereaza document pentru operatie</div>
<div class="t" style="left:997.56px;top:567.21px;font-size:19.6px;color:#1f1f1f;letter-spacing:0.104px;">Toate tipizatele</div>
<div class="t" style="left:1174.56px;top:567.21px;font-size:19.6px;color:#2756d4;transform:scaleX(0.9699);transform-origin:0.44px 0;">Tipizate Plus</div>
<div class="t" style="left:1327.06px;top:567.21px;font-size:19.6px;color:#1f1f1f;letter-spacing:-0.053px;">Tipizate personalizate</div>
<div class="b" style="left:998px;top:605.5px;width:853.3px;height:1.3999999999999773px;background:#f0f0f0"></div>
<div class="b" style="left:1173.8px;top:603.5px;width:108.60000000000014px;height:3.2999999999999545px;background:#2756d4"></div>
<div class="b" style="left:997.6px;top:630px;width:703px;height:44.4px;border:1.6px solid #3a6ee0;border-radius:9px;box-sizing:border-box;background:#fff;box-shadow:0 0 0 2.8px rgba(5,145,255,0.08)"></div>
<div class="t" style="left:1016.18px;top:644.21px;font-size:19.6px;color:#1f1f1f;transform:scaleX(0.9307);transform-origin:0.82px 0;">detasa</div>
<svg class="b" style="left:1016px;top:662px;" width="56" height="5" viewBox="0 0 56 5"><path d="M0,3 L2,1 L4,4 L6,1 L8,4 L10,1 L12,4 L14,1 L16,4 L18,1 L20,4 L22,1 L24,4 L26,1 L28,4 L30,1 L32,4 L34,1 L36,4 L38,1 L40,4 L42,1 L44,4 L46,1 L48,4 L50,1 L52,4 L54,1" fill="none" stroke="#e02020" stroke-width="1.1"/></svg>
<div class="b" style="left:1715.5px;top:630px;width:135.5px;height:44.4px;border:1.5px solid #cfcfcf;border-radius:9px;box-sizing:border-box;background:#f5f5f5"></div>
<div class="t" style="left:1737.41px;top:644.21px;font-size:19.6px;color:#bfbfbf;transform:scaleX(0.9335);transform-origin:0.99px 0;">Genereaza</div>
<div class="b" style="left:997.6px;top:680.6px;width:703px;height:100.5px;background:#fff;border-radius:12px;box-shadow:0 8px 22px 0 rgba(0,0,0,0.08),0 4px 8px -5px rgba(0,0,0,0.12),0 12px 39px 11px rgba(0,0,0,0.05)"></div>
<div class="b" style="left:1004.6px;top:730.8px;width:689.9px;height:44.700000000000045px;background:#f4f4f4;border-radius:6px"></div>
<div class="t" style="left:1020.96px;top:700.71px;font-size:19.6px;color:#1f1f1f;letter-spacing:-0.141px;">ActAditionalDetasareAltaTara.docx</div>
<div class="t" style="left:1019.39px;top:745.51px;font-size:19.6px;color:#1f1f1f;transform:scaleX(0.9692);transform-origin:1.61px 0;">DecizieDetasare.docx</div>
<div class="b" style="left:1879.5px;top:1101.3px;width:79px;height:79px;border-radius:50%;background:#3478f6;box-shadow:0 4px 14px rgba(0,0,0,0.16)"></div>
<svg class="b" style="left:1898px;top:1120px;" width="40" height="40" viewBox="0 0 40 40"><ellipse cx="20.5" cy="18.7" rx="17.4" ry="14" fill="#fff"/><path d="M10,27 C10.5,30 9,33.5 7.2,36 C7.5,37 9.5,36.8 12,35.6 C14.5,34.4 16,33 18,32.5 L14,28 Z" fill="#fff"/></svg>
</body></html>
